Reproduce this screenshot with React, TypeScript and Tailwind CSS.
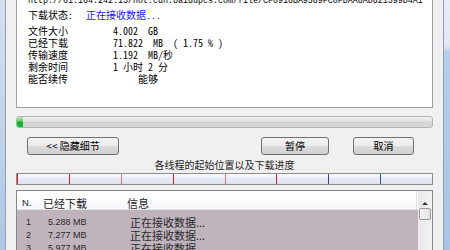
const mono = "font-['Noto_Sans_Mono_CJK_SC','Liberation_Mono',monospace]";

const info: [string, string][] = [
  ["文件大小", "4.002  GB"],
  ["已经下载", "71.822  MB  ( 1.75 % )"],
  ["传输速度", "1.192  MB/秒"],
  ["剩余时间", "1 小时 2 分"],
  ["能否续传", "     能够"],
];

// thread start markers, one per grid cell
const ticks = [
  "bg-[#d81e1e]",
  "bg-[#d81e1e]",
  "bg-[#e5707c]",
  "bg-[#d81e1e]",
  "bg-[#e5707c]",
  "bg-[#d81e1e]",
  "bg-[#4a3aa0]",
  "bg-[#2d4fb8]",
];

const rows: [string, string][] = [
  ["1", "5.288 MB"],
  ["2", "7.277 MB"],
  ["3", "5.977 MB"],
];

function Button({ label, className }: { label: string; className: string }) {
  return (
    <div
      className={
        "flex h-[18px] shrink-0 items-center justify-center rounded-[3px] border border-[#707070] bg-[linear-gradient(to_bottom,#f3f3f3_0%,#ebebeb_50%,#dcdcdc_50%,#cfcfcf_100%)] text-[10px] leading-none text-black " +
        className
      }
    >
      {label}
    </div>
  );
}

export default function App() {
  return (
    <div className="flex h-[250px] w-[450px] overflow-hidden bg-[#f0f0f0] font-['Noto_Sans_CJK_SC',sans-serif]">
      <div className="w-[5px] shrink-0 bg-[linear-gradient(to_bottom,#d5e0ee,#adc7e7)]" />
      <div className="w-px shrink-0 bg-[#8e9fb6]" />

      <div className="flex w-[437px] shrink-0 flex-col px-[10px]">
        {/* info panel */}
        <div className={"h-[108px] shrink-0 border-x border-b border-[#a0a0a0] bg-white pl-[11px] text-[10px] text-black " + mono}>
          <div className="-mt-[4px] h-[11px] overflow-hidden whitespace-nowrap font-['Liberation_Mono',monospace] text-[8.33px] leading-[11px]">
            http://61.164.242.13/hot.cdn.baidupcs.com/file/CF0918BA9589FC0FDAA8AD821399D4A1
          </div>
          <div className="mt-[2px] flex h-[12px] leading-[12px]">
            <span className="w-[58px]">下载状态:</span>
            <span className="text-[#1616ff]">正在接收数据...</span>
          </div>
          <div className="mt-[4px]">
            {info.map(([k, v]) => (
              <div key={k} className="flex h-[12px] leading-[12px]">
                <span className="w-[85px] shrink-0">{k}</span>
                <span className="whitespace-pre">{v}</span>
              </div>
            ))}
          </div>
        </div>

        {/* total progress */}
        <div className="mt-[8px] flex h-[12px] shrink-0 overflow-hidden rounded-[3px] border border-[#b4b4b4] bg-[linear-gradient(to_bottom,#f2f2f2,#dedede_45%,#d2d2d2_55%,#dadada)]">
          <div className="w-[6px] bg-[linear-gradient(to_bottom,#b8ecb8,#5fd35f_40%,#07b025_55%,#0fc22f)]" />
        </div>

        {/* buttons */}
        <div className="mt-[9px] flex shrink-0">
          <Button label="<< 隐藏细节" className="ml-[11px] w-[92px]" />
          <Button label="暂停" className="ml-[142px] w-[68px]" />
          <Button label="取消" className="ml-[24px] w-[61px]" />
        </div>

        <div className="mt-[3px] h-[14px] shrink-0 text-center text-[10px] leading-[14px] text-[#222]">
          各线程的起始位置以及下载进度
        </div>

        {/* thread bar */}
        <div className="mt-[1px] grid h-[12px] shrink-0 grid-cols-8 border border-[#8c8c8c] bg-[linear-gradient(to_bottom,#fbfcfe,#e6eaf5_50%,#dde2f0)]">
          {ticks.map((c, i) => (
            <div key={i} className="flex">
              <div className={"w-px " + c} />
            </div>
          ))}
        </div>

        {/* thread list */}
        <div className="mt-[5px] flex h-[80px] shrink-0 border border-[#828790] bg-white">
          <div className="flex min-w-0 flex-1 flex-col">
            <div className="flex h-[19px] shrink-0 border-b border-[#e3e4e6] bg-[linear-gradient(to_bottom,#ffffff,#f6f7f9)] pt-[6px] text-[11px] leading-[12px] text-[#1e1e1e]">
              <div className="w-[23px] pl-[5px] font-['Liberation_Sans',sans-serif] text-[9.5px]">N.</div>
              <div className="w-[85px] pl-[3px]">已经下载</div>
              <div className="w-[291px] pl-[2px]">信息</div>
              <div className="-mt-[6px] h-[19px] w-px bg-[#e0e2e6]" />
            </div>
            <div className="flex-1 bg-[#bfb4bd] pt-[6px] text-[#2a2a2a]">
              {rows.map(([n, v]) => (
                <div key={n} className="flex h-[13px] items-center leading-[13px]">
                  <div className="w-[23px] pl-[9px] font-['Liberation_Sans',sans-serif] text-[9px]">{n}</div>
                  <div className="w-[85px] pl-[8px] font-['Liberation_Sans',sans-serif] text-[9px]">{v}</div>
                  <div className="pl-[5px] text-[11px]">正在接收数据...</div>
                </div>
              ))}
            </div>
          </div>
          <div className="flex w-[14px] shrink-0 flex-col bg-[linear-gradient(to_right,#e9e9e9,#f3f3f3)]">
            <div className="flex h-[16px] items-end justify-center pb-[2px]">
              <div className="h-0 w-0 border-x-[3px] border-b-[3px] border-x-transparent border-b-[#3a3a3a]" />
            </div>
            <div className="mx-px mt-px h-[12px] rounded-[2px] border border-[#9a9a9a] bg-[linear-gradient(to_right,#f5f5f5,#e2e2e2)]" />
          </div>
        </div>
      </div>

      <div className="w-px shrink-0 bg-[#8e9fb6]" />
      <div className="w-[6px] shrink-0 bg-[linear-gradient(to_bottom,#e6edf6_0px,#dfe8f4_46px,#b6cde9_52px,#a9c4e6_250px)]" />
    </div>
  );
}
